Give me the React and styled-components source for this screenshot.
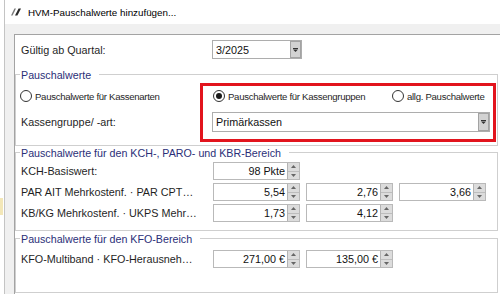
import React from "react";
import styled, { createGlobalStyle } from "styled-components";

const GlobalStyle = createGlobalStyle`
  html, body { margin: 0; padding: 0; background: #ffffff; }
  body { font-family: "Liberation Sans", Arial, sans-serif; color: #1a1a1a; }
  * { box-sizing: border-box; }
`;

const GROUP_LINE = "#cfcfcf";

const Page = styled.div`
  width: 500px;
  height: 294px;
  display: flex;
  overflow: hidden;
`;

const LeftStrip = styled.div`
  width: 4px;
  flex: none;
  display: flex;
  flex-direction: column;
  background: #ffffff;
`;

const NoteEdge = styled.div`
  margin-top: 198px;
  width: 3px;
  height: 17px;
  background: #f3e7b8;
`;

const Window = styled.div`
  flex: 1;
  min-width: 0;
  display: flex;
  flex-direction: column;
  border-left: 1px solid #c4c4c4;
`;

const TitleBar = styled.div`
  height: 24px;
  flex: none;
  display: flex;
  align-items: center;
  gap: 4px;
  padding-left: 6px;
  background: #ffffff;
  font-size: 9.8px;
  color: #000;
  white-space: nowrap;
`;

const Client = styled.div`
  flex: 1;
  display: flex;
  flex-direction: column;
  background: #f0f0f0;
  padding: 10px 0 0 9px;
`;

const Panel = styled.div`
  flex: 1;
  display: flex;
  flex-direction: column;
  background: #ffffff;
  border-top: 1px solid #a3a3a3;
  border-left: 1px solid #a3a3a3;
  padding: 5px 2px 0 0;
`;

const FieldRow = styled.div`
  display: flex;
  align-items: center;
  height: ${(p) => p.$h || 18}px;
  flex: none;
`;

const TopRow = styled(FieldRow)`
  padding-left: 1px;
`;

const Label = styled.div`
  width: 196px;
  flex: none;
  padding-left: 5px;
  font-size: 10.8px;
  color: #1f1f1f;
  white-space: nowrap;
  overflow: hidden;
`;

const Select = styled.div`
  width: ${(p) => p.$w}px;
  height: ${(p) => p.$h}px;
  display: flex;
  align-items: stretch;
  border: 1px solid #adadad;
  background: #fff;
`;

const SelectText = styled.div`
  flex: 1;
  display: flex;
  align-items: center;
  padding-left: 3px;
  font-size: 10.8px;
  color: #111;
`;

const DropButton = styled.div`
  width: 11px;
  flex: none;
  display: flex;
  align-items: center;
  justify-content: center;
  background: #d2d2d2;
  border: 1px solid #a3a3a3;
`;

const Group = styled.div`
  display: flex;
  flex-direction: column;
  flex: none;
  margin-top: ${(p) => p.$mt}px;
`;

const GroupHead = styled.div`
  height: 13px;
  display: flex;
  &::before {
    content: "";
    width: 4px;
    height: 7px;
    align-self: flex-end;
    border-top: 1px solid ${GROUP_LINE};
    border-left: 1px solid ${GROUP_LINE};
  }
  &::after {
    content: "";
    flex: 1;
    height: 7px;
    align-self: flex-end;
    border-top: 1px solid ${GROUP_LINE};
    border-right: 1px solid ${GROUP_LINE};
  }
`;

const GroupTitle = styled.div`
  padding: 0 8px 0 1px;
  font-size: 10.7px;
  line-height: 13px;
  color: #2b2f78;
  white-space: nowrap;
`;

const GroupBody = styled.div`
  position: relative;
  display: flex;
  flex-direction: column;
  gap: ${(p) => p.$gap || 0}px;
  border: 1px solid ${GROUP_LINE};
  border-top: none;
  padding: ${(p) => p.$pt}px 0 ${(p) => p.$pb}px 0;
`;

const Highlight = styled.div`
  position: absolute;
  left: 184px;
  top: 1px;
  width: 296px;
  height: 59px;
  border: 3px solid #e2141d;
  pointer-events: none;
`;

const RadioRow = styled.div`
  display: grid;
  grid-template-columns: 193px 179px auto;
  align-items: center;
  height: 14px;
  padding-left: 4px;
`;

const RadioOption = styled.div`
  display: flex;
  align-items: center;
  gap: 3px;
  font-size: 9.6px;
  letter-spacing: -0.3px;
  color: #1f1f1f;
  white-space: nowrap;
`;

const RadioCircle = styled.span`
  width: 12px;
  height: 12px;
  flex: none;
  border-radius: 50%;
  border: 1px solid #333;
  background: #fff;
  display: flex;
  align-items: center;
  justify-content: center;
  &::after {
    content: "";
    width: 6px;
    height: 6px;
    border-radius: 50%;
    background: #1a1a1a;
    display: ${(p) => (p.$checked ? "block" : "none")};
  }
`;

const Controls = styled.div`
  display: flex;
  gap: 6px;
  margin-left: 1px;
`;

const SpinBox = styled.div`
  width: 87px;
  height: 18px;
  display: flex;
  border: 1px solid #b9b9b9;
  background: #fff;
`;

const SpinValue = styled.div`
  flex: 1;
  display: flex;
  align-items: center;
  justify-content: flex-end;
  padding-right: 2px;
  font-size: 10.8px;
  color: #111;
  white-space: nowrap;
`;

const Spinner = styled.div`
  width: 12px;
  flex: none;
  display: flex;
  flex-direction: column;
  background: #dcdcdc;
  border-left: 1px solid #b3b3b3;
`;

const SpinHalf = styled.div`
  flex: 1;
  display: flex;
  align-items: center;
  justify-content: center;
  & + & {
    border-top: 1px solid #bdbdbd;
  }
`;

const TitleIcon = () => (
  <svg width="13" height="8" viewBox="0 0 13 8">
    <polygon points="0,7.5 1.6,7.5 5,0.5 3.4,0.5" fill="#7a7a7a" />
    <polygon points="4,7.5 6.4,7.5 10,0.5 7.6,0.5" fill="#2a2a2a" />
  </svg>
);

const DownArrow = () => (
  <svg width="5" height="4" viewBox="0 0 5 4">
    <rect x="0" y="0" width="5" height="1" fill="#333" />
    <polygon points="0,1.5 5,1.5 2.5,4" fill="#333" />
  </svg>
);

const SpinArrow = ({ up }) => (
  <svg width="5" height="3" viewBox="0 0 5 3">
    {up ? (
      <polygon points="0,3 5,3 2.5,0" fill="#666" />
    ) : (
      <polygon points="0,0 5,0 2.5,3" fill="#666" />
    )}
  </svg>
);

const Combo = ({ value, w, h }) => (
  <Select $w={w} $h={h}>
    <SelectText>{value}</SelectText>
    <DropButton>
      <DownArrow />
    </DropButton>
  </Select>
);

const Spin = ({ value }) => (
  <SpinBox>
    <SpinValue>{value}</SpinValue>
    <Spinner>
      <SpinHalf>
        <SpinArrow up />
      </SpinHalf>
      <SpinHalf>
        <SpinArrow />
      </SpinHalf>
    </Spinner>
  </SpinBox>
);

const Radio = ({ checked, children }) => (
  <RadioOption>
    <RadioCircle $checked={checked} />
    {children}
  </RadioOption>
);

const GroupBox = ({ title, mt, pt, pb, gap, children }) => (
  <Group $mt={mt}>
    <GroupHead>
      <GroupTitle>{title}</GroupTitle>
    </GroupHead>
    <GroupBody $pt={pt} $pb={pb} $gap={gap}>
      {children}
    </GroupBody>
  </Group>
);

const ValueRow = ({ label, values }) => (
  <FieldRow $h={18}>
    <Label>{label}</Label>
    <Controls>
      {values.map((v) => (
        <Spin key={v} value={v} />
      ))}
    </Controls>
  </FieldRow>
);

export default function App() {
  return (
    <>
      <GlobalStyle />
      <Page>
        <LeftStrip>
          <NoteEdge />
        </LeftStrip>
        <Window>
          <TitleBar>
            <TitleIcon />
            HVM-Pauschalwerte hinzufügen...
          </TitleBar>
          <Client>
            <Panel>
              <TopRow $h={19}>
                <Label>Gültig ab Quartal:</Label>
                <Combo value="3/2025" w={90} h={19} />
              </TopRow>

              <GroupBox title="Pauschalwerte" mt={10} pt={7} pb={13} gap={9}>
                <RadioRow>
                  <Radio>Pauschalwerte für Kassenarten</Radio>
                  <Radio checked>Pauschalwerte für Kassengruppen</Radio>
                  <Radio>allg. Pauschalwerte</Radio>
                </RadioRow>
                <FieldRow $h={20}>
                  <Label>Kassengruppe/ -art:</Label>
                  <Combo value="Primärkassen" w={278} h={20} />
                </FieldRow>
                <Highlight />
              </GroupBox>

              <GroupBox
                title="Pauschalwerte für den KCH-, PARO- und KBR-Bereich"
                mt={1}
                pt={2}
                pb={8}
                gap={3}
              >
                <ValueRow label="KCH-Basiswert:" values={["98 Pkte"]} />
                <ValueRow
                  label="PAR AIT Mehrkostenf. · PAR CPT…"
                  values={["5,54", "2,76", "3,66"]}
                />
                <ValueRow
                  label="KB/KG Mehrkostenf. · UKPS Mehr…"
                  values={["1,73", "4,12"]}
                />
              </GroupBox>

              <GroupBox title="Pauschalwerte für den KFO-Bereich" mt={2} pt={4} pb={24}>
                <ValueRow
                  label="KFO-Multiband · KFO-Herausneh…"
                  values={["271,00 €", "135,00 €"]}
                />
              </GroupBox>
            </Panel>
          </Client>
        </Window>
      </Page>
    </>
  );
}
